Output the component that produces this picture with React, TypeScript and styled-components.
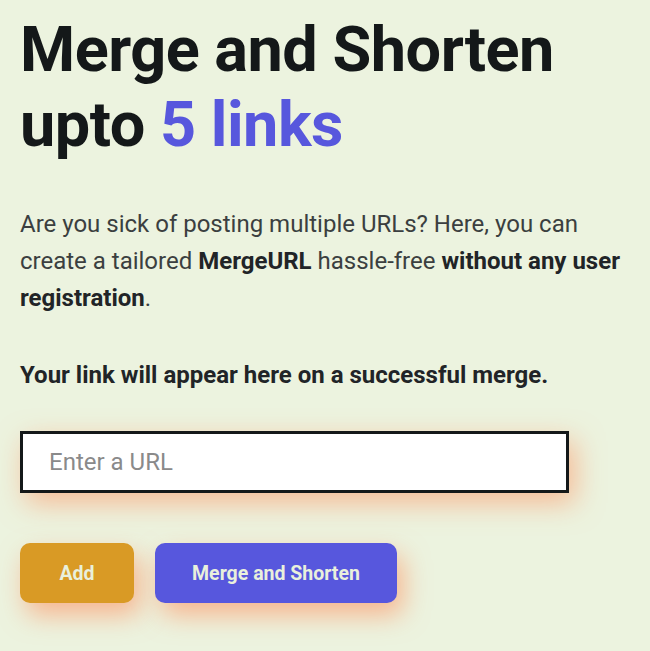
import styled, { createGlobalStyle } from "styled-components";

const GlobalStyle = createGlobalStyle`
  html, body {
    margin: 0;
    padding: 0;
    background-color: #ecf3df;
  }
  body {
    font-family: Roboto, "Liberation Sans", sans-serif;
  }
`;

const Page = styled.main`
  min-height: 651px;
  padding: 12px 12px 0 20px;
  box-sizing: border-box;
`;

const Heading = styled.h1`
  margin: 0;
  font-size: 63px;
  line-height: 75px;
  font-weight: 700;
  letter-spacing: -0.5px;
  color: #141819;
`;

const Accent = styled.span`
  color: #5757dd;
`;

const Paragraph = styled.p<{ $strong?: boolean }>`
  margin: 0;
  margin-top: ${({ $strong }) => ($strong ? "40px" : "44px")};
  max-width: 612px;
  font-size: 24px;
  line-height: 37px;
  color: ${({ $strong }) => ($strong ? "#212427" : "#3b3f40")};
  font-weight: ${({ $strong }) => ($strong ? 700 : 400)};

  b {
    color: #212427;
    font-weight: 700;
  }
`;

const UrlInput = styled.input`
  display: block;
  box-sizing: border-box;
  width: 549px;
  height: 62px;
  margin-top: 37px;
  padding: 0 26px;
  border: 3px solid #141819;
  background: #ffffff;
  font-family: Roboto, "Liberation Sans", sans-serif;
  font-size: 24px;
  color: #141819;
  outline: none;
  box-shadow: 6px 10px 28px rgba(255, 140, 90, 0.55);

  &::placeholder {
    color: #8a8a8a;
  }
`;

const ButtonRow = styled.div`
  display: flex;
  gap: 21px;
  margin-top: 50px;
`;

const Button = styled.button<{ $variant: "add" | "merge" }>`
  height: 60px;
  width: ${({ $variant }) => ($variant === "add" ? "114px" : "242px")};
  padding: 0;
  border: none;
  border-radius: 10px;
  background-color: ${({ $variant }) => ($variant === "add" ? "#d99a25" : "#5757dd")};
  color: #e9f0dc;
  font-family: Roboto, "Liberation Sans", sans-serif;
  font-size: 19.5px;
  font-weight: 700;
  cursor: pointer;
  box-shadow: 6px 12px 26px rgba(255, 140, 90, 0.6);
`;

export default function App() {
  return (
    <>
      <GlobalStyle />
      <Page>
        <Heading>
          Merge and Shorten
          <br />
          upto <Accent>5 links</Accent>
        </Heading>
        <Paragraph>
          Are you sick of posting multiple URLs? Here, you can create a tailored{" "}
          <b>MergeURL</b> hassle-free <b>without any user registration</b>.
        </Paragraph>
        <Paragraph $strong>Your link will appear here on a successful merge.</Paragraph>
        <UrlInput type="text" placeholder="Enter a URL" />
        <ButtonRow>
          <Button $variant="add">Add</Button>
          <Button $variant="merge">Merge and Shorten</Button>
        </ButtonRow>
      </Page>
    </>
  );
}
